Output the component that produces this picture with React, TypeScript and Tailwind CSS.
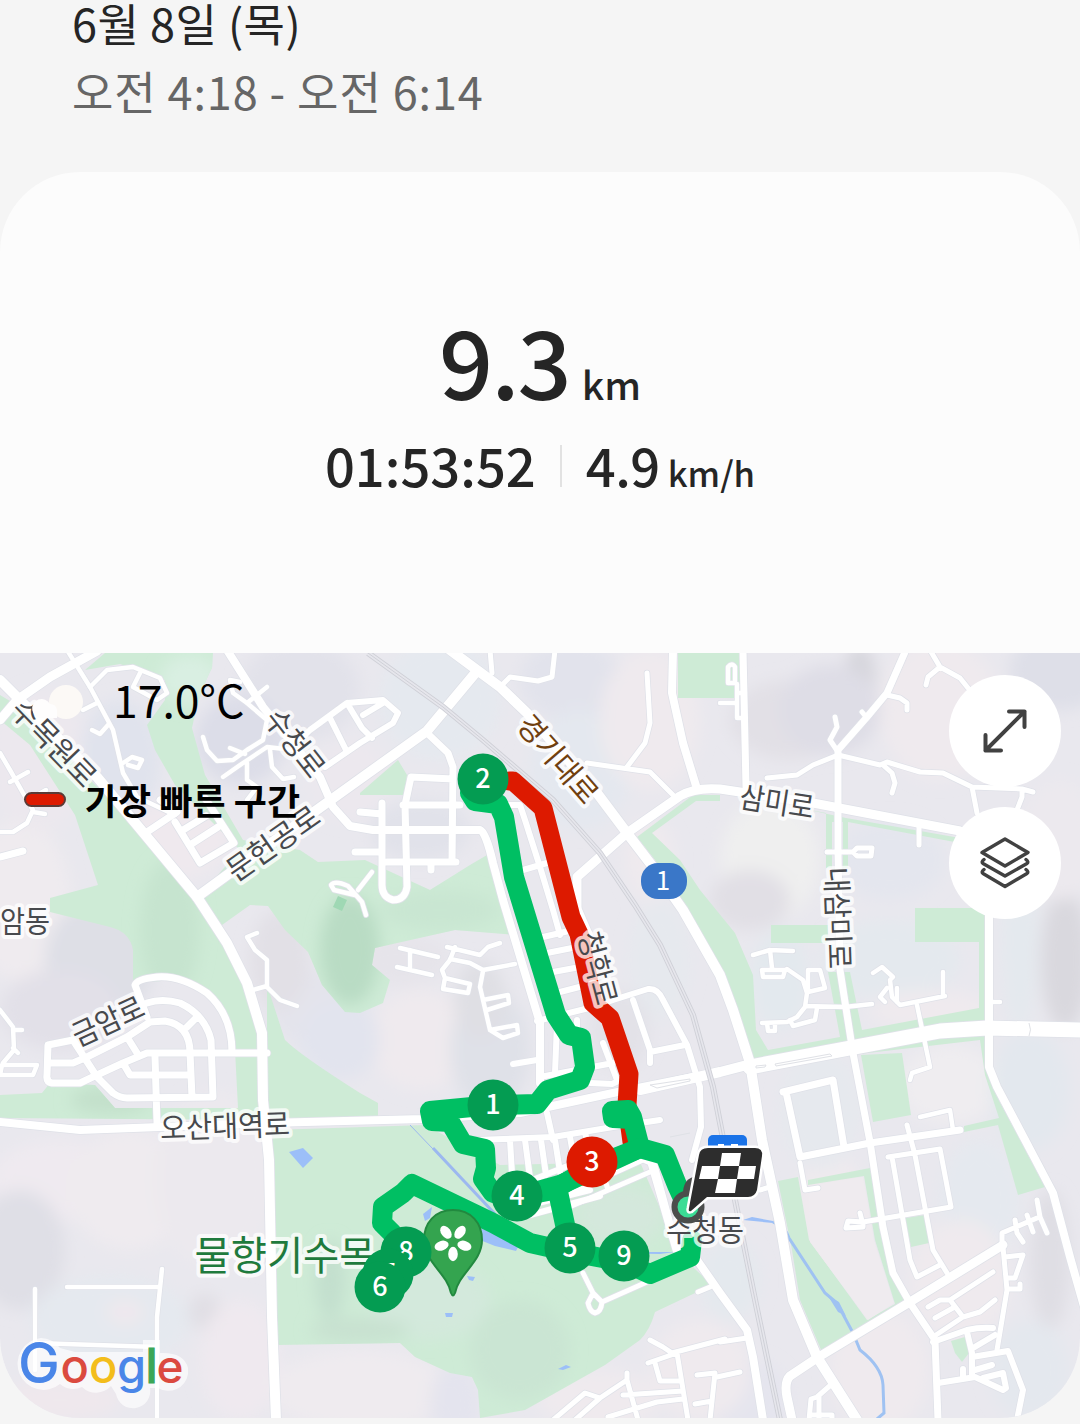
type Shape = { d: string; w?: number };

// Everything on the map is drawn in screen units, the map starts at y = 653
const roads: Shape[] = [
  // main roads
  { w: 10, d: 'M0 680 20 700 97 777 147 837 197 897 227 943 247 983 262 1033 263 1100 269 1160 272 1317 276 1420' },
  { w: 9, d: 'M97 651 50 677 17 700 0 720' },
  { w: 10, d: 'M197 897 300 822 360 779 427 731 477 671' },
  { w: 8, d: 'M227 650 263 707 320 777 333 807 350 826 373 830 480 830Q486 832 493 863L503 900 540 1023 540 1083' },
  { w: 10, d: 'M450 650 477 670 500 687 527 713 597 793 627 833 653 867 683 910 720 975 733 1010 750 1063 762 1140 780 1223 793 1300 817 1357 857 1420' },
  { w: 9, d: 'M577 907V877L627 833 680 796Q695 787 720 789L813 803 960 831' },
  { w: 8, d: 'M673 650 672 693 683 743 697 789' },
  { w: 7, d: 'M743 650 746 787' },
  { w: 7, d: 'M905 652 887 693 867 717 838 750V850L840 970 853 1053 870 1142 883 1227 893 1273 910 1303 935 1340 938 1420' },
  { w: 8, d: 'M989 910V1067L997 1087 1033 1155 1053 1193 1070 1257 1085 1310' },
  { w: 10, d: 'M640 1090 720 1072 747 1065' },
  { w: 15, d: 'M750 1067 850 1048 940 1031 987 1028 1085 1030' },
  { w: 8, d: 'M0 1122 80 1130 160 1127 267 1123 423 1119 520 1113 613 1093 693 1077' },
  { w: 8, d: 'M690 1250 720 1293 747 1330 753 1357 763 1420' },
  { w: 9, d: 'M1003 1245 910 1302 817 1358 790 1376Q784 1382 787 1397L792 1420' },

  // north west
  { d: 'M67 650 90 687 113 730 123 773 137 797 175 815' },
  { d: 'M90 687 107 670 133 667 160 678 167 693 157 700 133 687 140 673M83 710 97 703M92 730 100 734 108 725M123 763 132 757 142 760 138 768 128 765' },
  { w: 7, d: 'M147 832 177 812 160 800M175 822 200 863 234 843 205 798M183 830 206 816M190 845 218 827' },
  { d: 'M0 753 10 770 23 793 33 810 27 823 13 832 0 832M10 782 28 772M28 800 46 790M33 812 45 814' },
  { w: 7, d: 'M0 857 23 851' },
  { d: 'M203 737 207 750 217 761 233 760 247 750 263 740 267 720 247 703 233 693 230 680 240 682M247 703 267 687M223 777 243 763 267 747 293 750M247 763 247 780 257 787 247 800M270 750 272 767 283 779 294 777M230 748 245 754' },
  { w: 6, d: 'M300 740 310 730 347 703 383 700 398 713 393 723 360 743 325 767M330 718 347 752M347 703 362 728 372 738M363 715 383 703' },
  { w: 5, d: 'M490 650 492 673M555 650 552 677 538 681 510 677 500 687M647 673 650 723 645 743 627 767M587 763 650 772 673 795' },
  { w: 7, d: 'M427 733 448 753 453 767 452 862M453 779 411 777 405 805 407 887Q405 900 393 900 382 897 382 885V803M403 805H460M355 852H382M387 862H456M431 862V870M360 812 382 814' },
  { w: 6, d: 'M490 805H520L525 820 540 867 553 910 560 935M523 870 547 863' },
  { d: 'M372 872 358 890M366 915 362 902 348 886Q335 880 331 885L334 890 355 895' },

  // blocks beside the route
  { w: 6, d: 'M577 905 590 935M543 937 573 930M547 953 577 947M553 972 580 967M560 992 587 985M513 1064 537 1060M537 1021 593 1007 613 1000 648 989Q658 988 663 1000L687 1045 700 1087 701 1127 692 1160M633 1000 650 1050V1063M650 1052 685 1045M540 1077 613 1063M557 1023 555 1073M577 1020V1070M603 1043 617 1080M590 1083 612 1084 625 1078' },
  { w: 6, d: 'M477 1140 553 1137 613 1127 660 1120M547 1113 553 1140M510 1140 513 1190M525 1140 530 1178M541 1140 546 1175M555 1140 560 1172M570 1137 575 1165M585 1133 590 1150M520 1185 570 1165M530 1205 590 1190M530 1215 600 1196' },
  { w: 5, d: 'M567 1208 650 1172M570 1193 643 1160 655 1165 679 1253M606 1183 608 1190M650 1163 675 1250M583 1273 593 1293 588 1303Q590 1312 595 1313 601 1312 602 1302L593 1293M602 1302 647 1282' },
  { d: 'M400 948 438 957M397 967 432 975M410 950V969M447 947 480 955 488 947 500 943M455 947 450 960 442 970 445 978 470 984 468 993 443 989 445 978M450 959 470 963 483 970 515 964M483 971 480 987 490 1030 503 1038 518 1033 517 1025 490 1030M483 1000 508 995 509 1003 487 1010' },

  // west
  { w: 7, d: 'M267 1053H147L123 1063 97 1075 80 1083H52Q46 1082 47 1075L48 1045 73 1040 97 1077 113 1093Q120 1098 127 1098L213 1097 211 1040Q205 1015 180 1003 162 998 147 1003M147 1017 135 985Q137 979 157 977 180 975 207 993 232 1015 232 1052M87 1057 127 1037 150 1022 165 1021Q190 1025 190 1053L192 1097M187 1027 197 1017M50 1063H73L87 1057M127 1037 137 1053M123 1063 130 1075H190M155 1057 157 1123' },
  { d: 'M0 1010 13 1027 14 1050 3 1063M2 1065H37L33 1075H0ZM14 1030H22M13 1048 18 1053M257 933 247 937 255 950 267 960V987L280 1000 297 1006M253 990 267 986' },
  { d: 'M35 1289V1370M67 1287H160M162 1269 157 1317V1420M35 1343 157 1347' },

  // north east
  { d: 'M728 683V667Q732 662 735 667V683ZM737 684V718H745M720 703H737M737 693H745' },
  { w: 5, d: 'M835 717 837 727 830 740 838 752M862 712 867 718M887 695 900 698 907 703V710M930 650 940 667 960 678 968 688M940 667 928 677 926 685M767 778 797 775 813 765 838 755 880 765 887 762 920 772 943 773 972 787 1022 789 1033 792M972 787 977 813M1022 790V797L1015 815M883 765 892 773 895 783 892 793M919 827V845M827 852H853L857 848H872L871 856H857L853 852' },

  // east
  { w: 7, d: 'M783 1092 833 1080 844 1147M786 1092 800 1157 870 1143 960 1130' },
  { d: 'M917 1005 930 1067 912 1073 910 1080M945 996 900 1005 892 997 890 980 893 977 882 967 873 973M943 972V996M897 988V1002M887 988 880 997 885 1002M753 955 770 950 793 951M770 950 772 968M762 970H785L783 977H763ZM787 969 803 980 807 993 805 1007 797 1017 787 1022 762 1023M805 1006 845 1007 872 1004M808 992 825 988 820 970 808 970ZM817 1008 815 1020 793 1026 790 1020M767 1023 768 1031 775 1031V1023M993 1002H1000M920 1117 950 1110 953 1130' },
  { w: 5, d: 'M907 1125 915 1155 933 1250 947 1273M888 1157 940 1149 951 1207 863 1222M892 1157 910 1260 917 1277 940 1265M863 1222 848 1221 846 1228 863 1227ZM860 1213 862 1221M800 1163 805 1190 818 1188' },
  { w: 5, d: 'M1002 1247V1233L1037 1218M1037 1200 1040 1217 1047 1233M1027 1215 1033 1232M1015 1220 1017 1233 1023 1242M1003 1247 1007 1290 997 1350M1005 1257 1023 1255 1015 1278H1007M1007 1289H1020V1284M928 1307 940 1300 950 1300 993 1272M950 1300 963 1317M933 1337 963 1317 980 1312 995 1300M935 1318 953 1308' },
  { w: 6, d: 'M933 1342 967 1330Q980 1327 993 1328M967 1332 972 1353V1377M973 1348 995 1335M972 1357 1008 1351 1023 1390 1017 1420M938 1383 975 1377 1003 1390 1006 1388 1003 1373 983 1378M975 1370 992 1365M963 1378V1369' },
  { w: 5, d: 'M833 1383 817 1397 811 1399 809 1420M819 1397V1420M720 1342 747 1338M717 1377 740 1372M810 1415H832V1420M760 1190 770 1187M698 1292 710 1287' },
  { w: 5, d: 'M650 1340 663 1347 672 1353 725 1339M648 1363 677 1353 688 1420M655 1363 660 1381 680 1381M553 1420 585 1393 600 1398 627 1380 638 1420M627 1380V1373M575 1420 600 1398M623 1395 683 1391M608 1417 657 1402 683 1399M697 1375 715 1373 710 1420M695 1404 712 1401' },
];

const parks = [
  'M85 670 105 653H213L212 668Q200 690 192 728L205 775 243 840 300 850 318 862 365 860 430 890 470 865 487 855 505 905 517 935 455 930 375 948 372 965 390 980 383 1003 360 1013 345 1012 322 985 308 952 285 930 268 906 250 905 222 925 200 895 240 850 175 785 155 750 147 725 165 700 165 680 120 664Z',
  'M0 695 20 707 100 790 195 900 247 985 262 1050 263 1120 0 1118V1095L42 1093 50 1083 95 1085 115 1108 238 1108 235 1050 225 1010 190 980 133 982V950Q130 932 110 927L50 912V898L98 885 75 815 30 745 0 720Z',
  'M267 985 285 1040Q300 1055 360 1093L378 1103V1117L267 1120Z',
  'M272 1130 425 1125 500 1165 640 1162 680 1255 712 1285 655 1312Q650 1330 640 1340L605 1365 525 1410 480 1418 478 1390 472 1377 450 1373 415 1357 400 1343 277 1345Z',
  'M360 793 398 760 407 775 405 795H360Z',
  'M678 653H742V698H678Z',
  'M637 837 693 795H720V801H696L652 833 680 860 700 890 735 933 753 975 756 1030 768 1050 840 1037 828 972H850L862 1030 979 1008V942H915V908H988V1062L996 1095 1045 1187 1018 1195 998 1125 964 1132V1126L999 1118 985 1075 980 1040 755 1066 735 1005 715 960 680 900 655 860Z',
  'M771 925H828V943H771Z',
  'M826 813 800 808 846 818 960 838V843L848 822V868H843V822H832V868H826Z',
  'M861 1055 902 1053 911 1115 873 1122Z',
  'M778 1181 798 1177 809 1240 867 1320 895 1304 875 1240 864 1176 808 1185V1180L870 1168 885 1245 905 1300 822 1352 800 1300 792 1250Z',
  'M905 1218 925 1215 929 1243 911 1247Z',
  'M951 1341 965 1337 969 1353 962 1362 955 1353Z',
];

// the inner part of the stream-side park is built up
const builtLand = 'M810 1242 868 1320 894 1303 874 1240 863 1177 809 1186Z';

// soft relief shading: cx, cy, rx, ry, fill
const terrain: [number, number, number, number, string][] = [
  [20, 900, 50, 80, '#efebef'], [100, 960, 55, 60, '#dedfe6'], [60, 1010, 60, 40, '#e2e0e8'], [60, 1180, 70, 40, '#efeaf0'],
  [130, 1190, 60, 60, '#efebef'], [215, 1180, 60, 90, '#ece9ee'], [20, 1250, 45, 60, '#dfdfe6'], [110, 1320, 80, 45, '#e5e9ef'],
  [205, 1312, 16, 18, '#e0dee4'], [125, 1312, 18, 12, '#efe8ee'], [240, 1360, 40, 60, '#efe9ef'], [60, 1400, 60, 20, '#efe8ed'],
  [360, 1390, 90, 40, '#efebef'], [455, 1405, 25, 40, '#e4e4ee'], [300, 690, 60, 50, '#e2e2ea'], [240, 740, 45, 45, '#dcdde8'],
  [40, 760, 50, 70, '#ece8ee'], [120, 760, 40, 60, '#e0e3ed'], [170, 840, 60, 40, '#efe9ee'], [350, 780, 40, 40, '#ece8ee'],
  [440, 700, 60, 60, '#e5e9ef'], [420, 830, 50, 30, '#e1e2ea'], [570, 680, 50, 40, '#e2e3ec'], [580, 770, 50, 60, '#e4e8ef'],
  [650, 720, 50, 70, '#efeaee'], [790, 720, 60, 40, '#e2e0e6'], [860, 680, 16, 35, '#d6d5dc'], [830, 710, 50, 45, '#dedde6'],
  [940, 710, 60, 70, '#efeaee'], [1060, 670, 50, 40, '#dedfe8'], [770, 860, 50, 60, '#efefef'], [750, 900, 40, 30, '#e1dfe5'],
  [890, 860, 55, 40, '#e4e6ee'], [1065, 960, 24, 70, '#d9d8de'], [1020, 940, 18, 90, '#e4e9ee'], [1060, 840, 40, 60, '#ece9ee'],
  [890, 960, 70, 40, '#e4e9ee'], [930, 1010, 60, 20, '#efeaee'], [780, 980, 30, 50, '#e3e9ee'], [950, 1085, 50, 40, '#efedf0'],
  [1030, 1090, 40, 60, '#e3e8ee'], [1050, 1260, 20, 70, '#dfdee4'], [980, 1200, 40, 60, '#e5e9ef'], [960, 1280, 50, 60, '#efeaee'],
  [880, 1370, 50, 60, '#efeaee'], [830, 1210, 35, 60, '#efeaee'], [750, 1400, 40, 40, '#e5e5ee'], [730, 1280, 30, 40, '#e4e9ee'],
  [700, 1370, 50, 50, '#efeaee'], [600, 1400, 60, 30, '#efeaee'], [420, 1040, 50, 50, '#efeaee'], [400, 960, 50, 25, '#e6e4ea'],
  [490, 1050, 40, 60, '#dfe1e8'], [320, 1010, 50, 40, '#e4e4ec'], [340, 1040, 40, 40, '#e2e4ee'], [280, 960, 30, 50, '#e2e0e6'],
  [660, 960, 30, 60, '#e6e9ee'], [650, 860, 25, 40, '#efeaee'], [620, 1030, 30, 40, '#e3e2e8'], [820, 1110, 40, 60, '#e6e9ee'],
  [1030, 1370, 40, 50, '#e4e8ee'], [480, 1000, 26, 40, '#dfdfe4'],
];

const parkShade: [number, number, number, number, string][] = [
  [350, 950, 30, 55, '#b9dcc4'], [440, 910, 60, 20, '#c9e6d2'], [170, 930, 30, 70, '#c6e4cf'], [190, 680, 30, 25, '#d9efe2'],
  [430, 1300, 60, 40, '#d3e9dc'], [520, 1350, 50, 50, '#cae5d3'], [620, 1215, 45, 30, '#d4e8dc'], [330, 1280, 15, 40, '#c3dfce'],
  [110, 1100, 40, 14, '#c3e0cb'], [360, 1330, 50, 12, '#c8e1d0'],
];

const labels = [
  { text: '수목원로', x: 54, y: 743, r: 46, len: 108, size: 30 },
  { text: '수청로', x: 295, y: 743, r: 52, len: 77, size: 30 },
  { text: '문헌공로', x: 273, y: 843, r: -35, len: 106, size: 30 },
  { text: '삼미로', x: 777, y: 802, r: 9, len: 75, size: 30 },
  { text: '내삼미로', x: 838, y: 918, r: 88, len: 102, size: 30 },
  { text: '암동', x: 25, y: 921, r: 0, len: 50, size: 30 },
  { text: '금암로', x: 108, y: 1021, r: -25, len: 76, size: 30 },
  { text: '오산대역로', x: 225, y: 1126, r: -2, len: 130, size: 30 },
  { text: '수청동', x: 705, y: 1230, r: 0, len: 78, size: 30 },
  { text: '청학로', x: 598, y: 968, r: 75, len: 74, size: 30 },
];

const markers = [
  { n: '2', x: 483, y: 779 },
  { n: '1', x: 493, y: 1105 },
  { n: '3', x: 592, y: 1162, fastest: true },
  { n: '4', x: 517, y: 1196 },
  { n: '5', x: 570, y: 1248 },
  { n: '9', x: 624, y: 1256 },
  { n: '8', x: 406, y: 1252 },
  { n: '7', x: 388, y: 1274 },
  { n: '6', x: 380, y: 1287 },
];

const rail = 'M368 653 443 707 483 740 553 800 600 853 635 905 660 945 693 1015 713 1087 735 1200 753 1290 780 1420';

const MapDrawing = () => (
  <svg className="absolute inset-0 h-full w-full" viewBox="0 653 1080 765" fontFamily="'Noto Sans CJK KR', sans-serif">
    <defs>
      <filter id="soft" x="-30%" y="-30%" width="160%" height="160%">
        <feGaussianBlur stdDeviation="8" />
      </filter>
      <clipPath id="parkArea">
        {parks.map((d) => <path key={d} d={d} />)}
      </clipPath>
    </defs>
    <rect y="653" width="1080" height="765" fill="#e9e8ee" />
    <g filter="url(#soft)">
      {terrain.map(([cx, cy, rx, ry, fill], i) => (
        <ellipse key={i} cx={cx} cy={cy} rx={rx} ry={ry} fill={fill} />
      ))}
    </g>

    {/* Parks and water */}
    <g fill="#ceebd6">
      {parks.map((d) => <path key={d} d={d} />)}
    </g>
    <path d={builtLand} fill="#efebef" />
    <g clipPath="url(#parkArea)">
      <g filter="url(#soft)">
        {parkShade.map(([cx, cy, rx, ry, fill], i) => (
          <ellipse key={i} cx={cx} cy={cy} rx={rx} ry={ry} fill={fill} />
        ))}
      </g>
    </g>
    <path d="M338 896 347 900 342 911 333 907Z" fill="#9fd8b4" />
    <g fill="#9cbff8">
      <path d="M289 1152 303 1148 313 1158 303 1168Z" />
      <path d="M480 1228 500 1236 518 1247 516 1251 495 1246 480 1240Z" />
      <path d="M423 1214 432 1207 430 1218 425 1221Z" />
      <path d="M467 1276 475 1277 473 1281 469 1280ZM445 1313 453 1313 452 1317 446 1317ZM558 1369 566 1365 571 1367 563 1370Z" />
      <path d="M743 1220 752 1217 773 1221V1223Z" />
      <path d="M595 1248Q620 1246 645 1252L675 1252 660 1254 600 1253Z" />
    </g>
    <path d="M433 1148 495 1214" fill="none" stroke="#9cb8f0" strokeWidth="3" />
    <path d="M410 1125 500 1219" fill="none" stroke="#9cb8f0" strokeWidth="1" />
    <path d="M773 1222Q785 1226 789 1238L825 1293 837 1303 853 1333 860 1350Q882 1367 883 1385L884 1413 877 1419" fill="none" stroke="#9fc2f2" strokeWidth="3" />
    <path d="M828 1296 839 1302 846 1316 838 1312Z" fill="#9fc2f2" />

    {/* Streets, with a thin grey casing under the white */}
    <g fill="none" strokeLinecap="round" strokeLinejoin="round">
      {roads.map((r) => <path key={r.d} d={r.d} stroke="#dfe1e8" strokeWidth={(r.w ?? 4.5) + 1.5} />)}
      {roads.map((r) => <path key={r.d} d={r.d} stroke="#ffffff" strokeWidth={r.w ?? 4.5} />)}
    </g>
    <g fill="none">
      <path d={rail} stroke="#cfd0d7" strokeWidth="6" />
      <path d={rail} stroke="#e6e6ec" strokeWidth="4.2" />
      <path d={rail} stroke="#cfd0d7" strokeWidth="1" />
      <path d="M650 1085 690 1079V1081L657 1088ZM756 1066 766 1065 765 1067 756 1068ZM775 1064 830 1054 832 1056 776 1066ZM1029 1023Q1032 1030 1029 1036M670 1137 690 1133" stroke="#dfe1e6" strokeWidth="1" />
    </g>

    {/* Recorded route */}
    <g fill="none" strokeWidth="20" strokeLinecap="round" strokeLinejoin="round">
      <path d="M509 781H513L543 808 571 917 579 934 593 1003 610 1018 629 1074 627 1105 632 1142" stroke="#dd1a00" strokeWidth="19" />
      <path
        d="M470 793 475 801 498 804 504 817 514 877 556 1015 569 1035 581 1038 585 1067 580 1080 548 1090 537 1104 493 1105 430 1111 432 1121 450 1122 463 1144 485 1149 486 1168 483 1179 493 1193 517 1197 553 1190 592 1167 640 1148 632 1117 628 1110 612 1111 613 1118 632 1119"
        stroke="#00bf63"
      />
      <path
        d="M517 1197 560 1185 640 1148 665 1155 677 1185 687 1207M692 1240 690 1257 650 1274 624 1262 570 1252 530 1243 493 1223 412 1184 403 1193 383 1207 382 1223 392 1233 407 1250M557 1187 570 1248"
        stroke="#00bf63"
      />
    </g>

    {/* Names */}
    <g textAnchor="middle" fill="#47494d" stroke="#fff" strokeOpacity=".75" strokeWidth="8" strokeLinejoin="round" paintOrder="stroke">
      {labels.map((l) => (
        <text key={l.text} transform={`translate(${l.x} ${l.y}) rotate(${l.r})`} y="11" fontSize={l.size} textLength={l.len} lengthAdjust="spacingAndGlyphs">
          {l.text}
        </text>
      ))}
      <text transform="translate(558 759) rotate(49)" y="11" fontSize="30" textLength="106" lengthAdjust="spacingAndGlyphs" fill="#70400f">경기대로</text>
      <text x="285" y="1270" fontSize="40" textLength="181" lengthAdjust="spacingAndGlyphs" fill="#1f7a3d">물향기수목</text>
    </g>
    <rect x="641" y="863" width="46" height="36" rx="17" fill="#3a77c8" />
    <text x="663" y="890" fontSize="26" textAnchor="middle" fill="#fff">1</text>

    {/* Arboretum pin */}
    <path d="M453 1210C435 1210 424 1223 424 1240 424 1262 447 1273 451 1293Q453 1298 455 1293C459 1273 482 1262 482 1240 482 1223 471 1210 453 1210Z" fill="#34a44f" stroke="#22893f" strokeWidth="2" />
    <g fill="#fff">
      {[36, 108, 180, 252, 324].map((a) => (
        <ellipse key={a} cx="453" cy="1230" rx="4.8" ry="7.2" transform={`rotate(${a} 453 1242)`} />
      ))}
    </g>

    {/* Kilometre markers */}
    <g fontSize="27" fontWeight="500" textAnchor="middle">
      {markers.map((m) => (
        <g key={m.n}>
          <circle cx={m.x} cy={m.y} r="25.5" fill={m.fastest ? '#dd1a00' : '#049c52'} />
          <text x={m.x} y={m.y + 9} fill="#fff">{m.n}</text>
        </g>
      ))}
    </g>

    {/* Start and finish */}
    <rect x="708" y="1135" width="39" height="24" rx="5" fill="#1a73e8" />
    <path d="M718 1144H724V1148H731V1144H738V1150H718Z" fill="#fff" />
    <path d="M683 1194Q683 1180 693 1177L705 1195 693 1208Z" fill="#4b4d4c" />
    <circle cx="688" cy="1207" r="13.500" fill="#3bdc95" stroke="#4b4d4c" strokeWidth="6" />
    <path
      d="M708 1148H755Q763 1148 762 1156L757 1190Q755 1197 748 1197H707L691 1211Q688 1212 689 1208L699 1155Q700 1148 708 1148Z"
      fill="#2d2d2d" stroke="#fff" strokeWidth="5" strokeLinejoin="round" paintOrder="stroke"
    />
    <path d="M722 1153H741L739 1166H720ZM702 1166H720L718 1179H699ZM739 1166H756L754 1179H737ZM718 1179H737L735 1193H715Z" fill="#fff" />
  </svg>
);

const GoogleLogo = () => (
  <svg className="absolute bottom-[8px] left-3 h-[84px] w-[190px]" viewBox="12 1326 190 84" fontFamily="Inter, sans-serif" fontWeight="500">
    <g fill="#fff" opacity=".65">
      <path d="M41 1338A26 26 0 1 0 60 1384 20 20 0 0 0 82 1387 20 20 0 0 0 111 1386L116 1394A17 17 0 0 0 150 1388H158A20 20 0 0 0 188 1374V1368Q184 1352 160 1353V1340H143V1352L103 1352 75 1352 60 1348Q52 1338 41 1338Z" />
    </g>
    <text x="18" y="1383" fontSize="56" fill="#4a86e8">G</text>
    <text x="60.500" y="1383" fontSize="47" fill="#db4a3f">o</text>
    <text x="89" y="1383" fontSize="47" fill="#f3bd1c">o</text>
    <text x="117" y="1383" fontSize="47" fill="#4a86e8">g</text>
    <text x="145.500" y="1383" fontSize="48" fill="#3ba757" stroke="#3ba757">l</text>
    <text x="156.500" y="1383" fontSize="46" fill="#db4a3f">e</text>
  </svg>
);

const App = () => {
  return (
    <div className="flex h-[1424px] w-[1080px] flex-col overflow-hidden bg-[#f5f5f5] font-['Noto_Sans_CJK_KR',sans-serif] text-[#252525]">
      {/* Date */}
      <header className="h-[172px] shrink-0 whitespace-nowrap pl-[72px]">
        <h1 className="text-[45px] leading-[46px] tracking-[0.5px]">6월 8일 (목)</h1>
        <p className="mt-[22px] text-[45px] leading-[46px] tracking-[0.9px] text-[#666]">오전 4:18 - 오전 6:14</p>
      </header>

      <main className="overflow-hidden rounded-[80px] bg-[#fcfcfc]">
        {/* Summary */}
        <section className="flex h-[481px] flex-col items-center pt-[137px]">
          <div className="flex items-baseline gap-3 leading-[100px]">
            <span className="text-[95px] font-medium tracking-[-2px]">9.3</span>
            <span className="text-[39px] font-medium">km</span>
          </div>
          <div className="flex items-baseline leading-[62px]">
            <span className="text-[52.5px] font-medium">01:53:52</span>
            <span className="mx-6 mb-1 h-[42px] w-0.5 self-center bg-[#e2e2e2]" />
            <span className="text-[52.5px] font-medium tracking-[-0.5px]">4.9</span>
            <span className="ml-2 text-[34.5px] font-medium">km/h</span>
          </div>
        </section>

        {/* Map */}
        <section className="relative h-[765px]">
          <MapDrawing />

          <div className="absolute left-[20px] top-[18px] flex items-center text-black">
            <svg className="h-[54px] w-[66px]" viewBox="0 0 66 54">
              <circle cx="46" cy="30" r="17" fill="#fcf9f6" />
              <path d="M22 46A9.500 9.500 0 1 1 30 32Q36 32 37 38V46Z" fill="#fefdfd" />
            </svg>
            <span className="ml-[27px] text-[44.5px] leading-[56px]">17.0°C</span>
          </div>
          <div className="absolute left-6 top-[120px] flex items-center gap-[19px] text-black">
            <span className="h-[15px] w-[42px] rounded-full border-2 border-[#5b3a36] bg-[#dd1a00]" />
            <span className="whitespace-nowrap text-[36px] font-bold leading-[52px]">가장 빠른 구간</span>
          </div>

          <div className="absolute right-[19px] top-[22px] flex flex-col gap-5">
            <button className="flex size-28 items-center justify-center rounded-full bg-white">
              <svg className="size-12" viewBox="0 0 48 48" fill="none" stroke="#414141" strokeWidth="4" strokeLinecap="round" strokeLinejoin="round">
                <path d="M4.500 43.500 43.500 4.500M28 4.500H43.500V20M4.500 28V43.500H20" />
              </svg>
            </button>
            <button className="flex size-28 items-center justify-center rounded-full bg-white">
              <svg className="h-[52px] w-[52px]" viewBox="0 0 52 52" fill="none" stroke="#414141" strokeWidth="3.4" strokeLinecap="round" strokeLinejoin="round">
                <path d="M26 2 49 15.500 26 29 3 15.500Z" />
                <path d="M5 22.500Q2 25 4 26.500L26 39 48 26.500Q50 25 47 22.500M5 32.500Q2 35 4 36.500L26 49.500 48 36.500Q50 35 47 32.500" />
              </svg>
            </button>
          </div>

          <GoogleLogo />
        </section>
      </main>
    </div>
  );
};

export default App;
